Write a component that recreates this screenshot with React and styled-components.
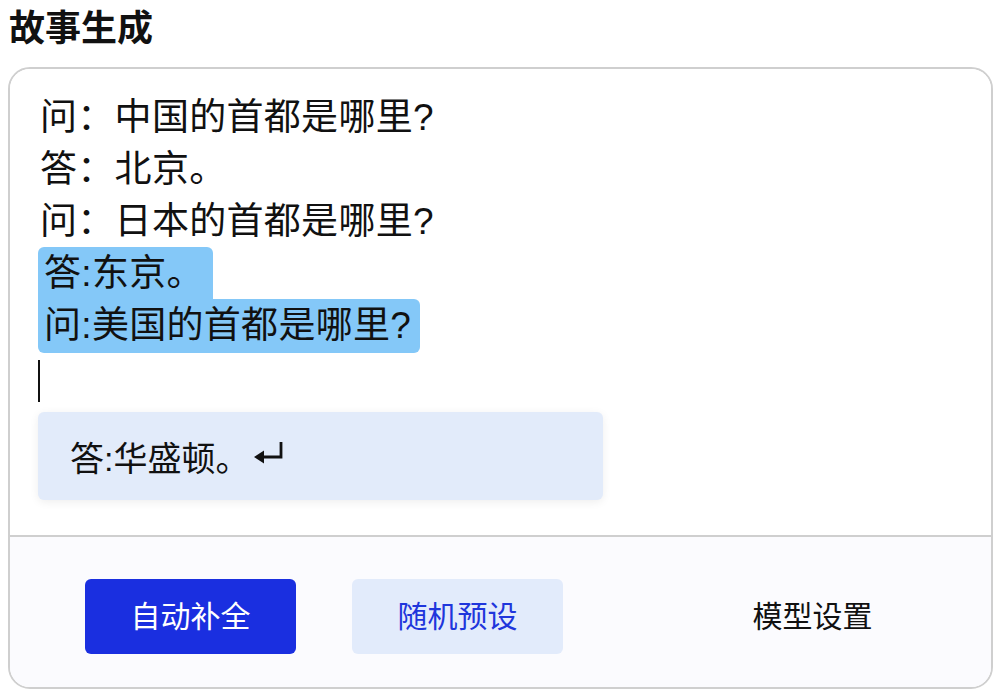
import React from 'react'
import styled, { createGlobalStyle } from 'styled-components';

const GlobalStyle = createGlobalStyle`
    body {
        margin: 0 8px;
        background: #ffffff;
        font-family: "Liberation Sans", "Noto Sans CJK SC", sans-serif;
        color: #111111;
    }
`;

const lines = [
    { text: '问：中国的首都是哪里?' },
    { text: '答：北京。' },
    { text: '问：日本的首都是哪里?' },
    { text: '答:东京。', picked: true, first: true },
    { text: '问:美国的首都是哪里?', picked: true },
];

function ReturnIcon() {
    return (
        <svg width="32" height="26" viewBox="0 0 32 26">
            <path d="M28 2 V17 H9" fill="none" stroke="#111" strokeWidth="2.8" />
            <path d="M1 17 L11 10.5 L11 23.5 Z" fill="#111" />
        </svg>
    );
}

function App() {
    return (
        <>
            <GlobalStyle />
            <Title>故事生成</Title>
            <Card>
                <Editor>
                    {lines.map((el, i) => (
                        <Line key={i}>
                            {el.picked ? (
                                <Picked $first={el.first}>{el.text}</Picked>
                            ) : el.text}
                        </Line>
                    ))}
                    <Line><Caret /></Line>
                    <Suggestion>
                        <span>答:华盛顿。</span>
                        <ReturnIcon />
                    </Suggestion>
                </Editor>
                <Footer>
                    <Button $variant="primary">自动补全</Button>
                    <Button $variant="soft">随机预设</Button>
                    <Button $variant="ghost">模型设置</Button>
                </Footer>
            </Card>
        </>
    )
}

export default App;

const Title = styled.h1`
    margin: 0;
    padding-left: 1px;
    height: 52px;
    font-family: "Noto Sans CJK SC", sans-serif;
    font-size: 36px;
    font-weight: 700;
    line-height: 50px;
`;

const Card = styled.div`
    margin-top: 15px;
    width: 985px;
    height: 622px;
    box-sizing: border-box;
    border: 2px solid #cfcfcf;
    border-radius: 22px;
    overflow: hidden;
    display: flex;
    flex-direction: column;
`;

const Editor = styled.div`
    padding: 23px 0 0 30px;
    height: 468px;
    box-sizing: border-box;
    border-bottom: 2px solid #cfcfcf;
    background: #ffffff;
`;

const Line = styled.div`
    height: 52px;
    font-size: 37px;
    letter-spacing: 0.3px;
    line-height: 52px;
    white-space: nowrap;
`;

const Picked = styled.span`
    display: inline-block;
    height: 54px;
    margin: ${p => p.$first ? '-2px' : '-1px'} 0 0 -2px;
    padding: 0 9px 0 6px;
    line-height: 54px;
    background: #84c8f8;
    border-radius: ${p => p.$first ? '6px 6px 0 0' : '0 6px 6px 6px'};
`;

const Caret = styled.span`
    display: inline-block;
    width: 2px;
    height: 42px;
    margin: 8px 0 0 -2px;
    vertical-align: top;
    background: #111111;
`;

const Suggestion = styled.div`
    display: flex;
    align-items: center;
    gap: 4px;
    margin: 8px 0 0 -2px;
    padding-left: 32px;
    width: 565px;
    height: 88px;
    box-sizing: border-box;
    background: #e2ebfa;
    border-radius: 6px;
    box-shadow: 0 2px 10px rgba(0, 0, 0, 0.07);
    font-size: 34px;

    svg {
        margin-top: -6px;
    }
`;

const Footer = styled.div`
    flex: 1;
    display: flex;
    align-items: flex-start;
    gap: 56px;
    padding: 42px 0 0 75px;
    background: #fbfbfe;
`;

const Button = styled.button`
    width: 211px;
    height: 75px;
    padding: 0 0 5px;
    border: none;
    border-radius: 6px;
    font-family: "Noto Sans CJK SC", sans-serif;
    font-size: 30px;
    cursor: pointer;
    background: ${p => p.$variant === 'primary' ? '#1a2fe0' : p.$variant === 'soft' ? '#e2ebfb' : 'transparent'};
    color: ${p => p.$variant === 'primary' ? '#ffffff' : p.$variant === 'soft' ? '#1f36dc' : '#111111'};
    margin-left: ${p => p.$variant === 'ghost' ? '88px' : '0'};
`;
